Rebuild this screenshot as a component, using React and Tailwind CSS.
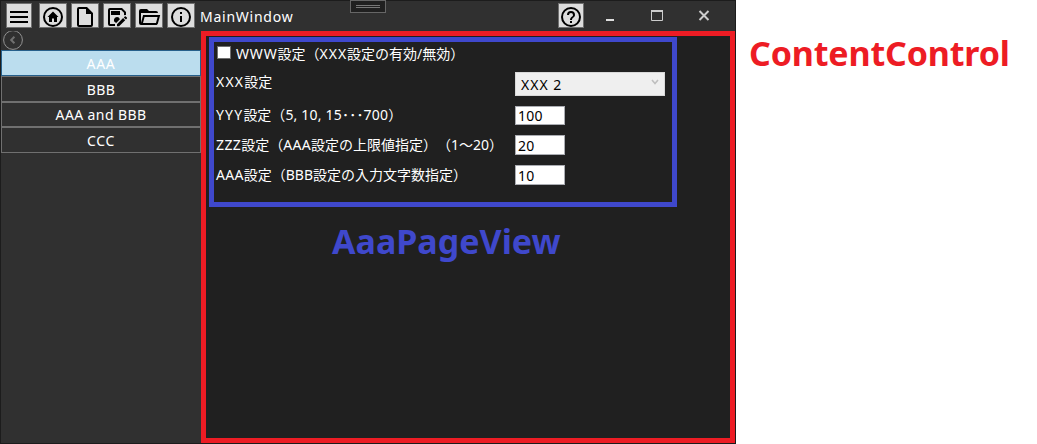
import React from "react";

const ICONS = {
  menu: "M3 6H21V8H3V6M3 11H21V13H3V11M3 16H21V18H3V16Z",
  home: "M12 2A10 10 0 1 0 12 22A10 10 0 0 0 12 2M12 4A8 8 0 1 1 12 20A8 8 0 0 1 12 4M12 6.5L6.5 12H8V17H11V13.5H13V17H16V12H17.5L12 6.5Z",
  file: "M14 2H6A2 2 0 0 0 4 4V20A2 2 0 0 0 6 22H18A2 2 0 0 0 20 20V8L14 2M18 20H6V4H13V9H18V20Z",
  folder:
    "M6.1 10L4 18V8H21A2 2 0 0 0 19 6H12L10 4H4A2 2 0 0 0 2 6V18A2 2 0 0 0 4 20H19C19.9 20 20.7 19.4 20.9 18.5L23.2 10H6.1M19 18H6L7.6 12H20.6L19 18Z",
  save: "M5 3H17L21 7V10.2C20.2 9.9 19.5 10 19 10.4V7.8L16.2 5H5V19H10V21H5A2 2 0 0 1 3 19V5A2 2 0 0 1 5 3M6 6H15V10H6V6M12 12A3 3 0 0 1 14.9 14.2L11.2 17.9A3 3 0 0 1 12 12M12 19.2L18.1 13.1L20.2 15.2L14.1 21.3H12V19.2M18.8 12.4L19.8 11.4C20.1 11.1 20.4 11.1 20.7 11.4L21.9 12.6C22.2 12.9 22.2 13.3 21.9 13.5L20.9 14.5L18.8 12.4Z",
  info: "M11 9H13V7H11M12 20A8 8 0 1 1 12 4A8 8 0 0 1 12 20M12 2A10 10 0 1 0 12 22A10 10 0 0 0 12 2M11 17H13V11H11V17Z",
  help: "M11 18H13V16H11V18M12 2A10 10 0 1 0 12 22A10 10 0 0 0 12 2M12 20A8 8 0 1 1 12 4A8 8 0 0 1 12 20M12 6A4 4 0 0 0 8 10H10A2 2 0 1 1 14 10C14 12 11 11.75 11 15H13C13 12.75 16 12.5 16 10A4 4 0 0 0 12 6Z",
};

function ToolButton({ icon, label, className = "w-7" }) {
  return (
    <button
      aria-label={label}
      className={`flex h-[25px] shrink-0 items-start justify-center overflow-hidden border border-[#707070] bg-[#dddddd] pt-px ${className}`}
    >
      <svg viewBox="0 0 24 24" className="h-6 w-6 shrink-0 fill-black">
        <path fillRule="evenodd" d={ICONS[icon]} />
      </svg>
    </button>
  );
}

function TitleBar() {
  return (
    <header className="relative flex h-[31px] w-full items-start border-t border-[#1c1c1c] bg-[#303030] pl-[5px] pt-[2px]">
      <ToolButton icon="menu" label="Menu" className="mr-[7px] w-[26px]" />
      <div className="flex gap-1">
        <ToolButton icon="home" label="Home" />
        <ToolButton icon="file" label="New" />
        <ToolButton icon="save" label="Save as" />
        <ToolButton icon="folder" label="Open" />
        <ToolButton icon="info" label="Info" />
      </div>
      <span className="ml-[5px] pt-px text-[14px] leading-[25px] tracking-[0.75px]">MainWindow</span>
      <div className="absolute left-[349px] -top-px flex h-[13px] w-9 flex-col items-center gap-px border border-[#666] bg-[#202020] pt-1">
        <span className="h-px w-6 bg-[#777]" />
        <span className="h-px w-6 bg-[#777]" />
      </div>
      <div className="ml-auto flex pr-[25px]">
        <ToolButton icon="help" label="Help" className="w-[26px]" />
        <svg viewBox="0 0 126 25" className="h-[25px] w-[126px]" fill="none">
          <path d="M22 17H30" stroke="#ddd" strokeWidth="2" />
          <path d="M67.5 7.5H78.5V17.5H67.5Z" stroke="#ccc" />
          <path d="M67 8H79" stroke="#ccc" strokeWidth="2" />
          <path d="M115.5 8L124.5 17M124.5 8L115.5 17" stroke="#ccc" strokeWidth="2" />
        </svg>
      </div>
    </header>
  );
}

function NavItem({ children, selected, className }) {
  return (
    <li
      className={`flex w-full items-center justify-center border text-[14px] leading-5 ${
        selected ? "border-[#26608c] bg-[#bbddee]" : "border-[#707070] bg-[#303030]"
      } ${className}`}
    >
      {children}
    </li>
  );
}

function Sidebar() {
  return (
    <nav className="w-[200px] shrink-0 bg-[#303030]">
      <div className="h-[19px] pl-[2px]">
        <svg viewBox="0 0 20 20" className="-mt-px h-5 w-5" fill="none">
          <circle cx="10" cy="10" r="9.4" stroke="#929292" />
          <path d="M11.4 6.8L8.2 10L11.4 13.2" stroke="#707070" strokeWidth="2" />
        </svg>
      </div>
      <ul className="pt-px">
        <NavItem selected className="h-[26px] pt-[2px] tracking-[0.7px]">AAA</NavItem>
        <NavItem className="h-[26px] pt-[2px] tracking-[0.4px]">BBB</NavItem>
        <NavItem className="h-[25px] tracking-[0.4px]">AAA and BBB</NavItem>
        <NavItem className="h-[26px] pt-[2px] tracking-[0.7px]">CCC</NavItem>
      </ul>
    </nav>
  );
}

function NumberField({ value, className }) {
  return (
    <div className={`w-[50px] border border-[#abadb3] bg-white pl-[2px] text-[14px] tracking-[0.3px] text-black ${className}`}>
      {value}
    </div>
  );
}

function Label({ children, className = "" }) {
  return (
    <span className={`w-[299px] shrink-0 whitespace-nowrap text-[14px] leading-5 [text-spacing-trim:space-all] ${className}`}>
      {children}
    </span>
  );
}

function SettingsPage() {
  return (
    <section className="ml-[3px] mt-px h-[170px] w-[468px] border-[5px] border-[#3f48cc] pl-[2px]">
      <div className="flex h-[30px] items-start pl-px">
        <span className="mt-1 h-[13px] w-[14px] shrink-0 border border-[#707070] bg-white" />
        <Label className="ml-[5px] mt-[2px]">
          <span className="tracking-[0.8px]">WWW</span>設定（<span className="tracking-[1px]">XXX</span>設定の有効/無効）
        </Label>
      </div>
      <div className="flex h-[34px] items-start">
        <Label>
          <span className="tracking-[1.2px]">XXX</span>設定
        </Label>
        <div className="flex h-6 w-[150px] items-center justify-between border border-[#d9d9d9] bg-[#efefef] pl-[5px] pr-[5px] text-[14px] text-black">
          <span className="pt-px tracking-[1px]">XXX 2</span>
          <svg viewBox="0 0 8 8" className="-mt-1 h-2 w-2" fill="none">
            <path d="M1 2L4 5.5L7 2" stroke="#bfbfbf" strokeWidth="1.6" />
          </svg>
        </div>
      </div>
      <div className="flex h-[29px] items-start">
        <Label className="-mt-px">
          <span className="tracking-[1.2px]">YYY</span>設定（<span className="tracking-[0.2px]">5, 10, 15･･･700</span>）
        </Label>
        <NumberField value="100" className="h-[19px] leading-[18px]" />
      </div>
      <div className="flex h-[30px] items-start">
        <Label>
          <span className="tracking-[0.4px]">ZZZ</span>設定（<span className="tracking-[0.3px]">AAA</span>設定の上限値指定）（1～20）
        </Label>
        <NumberField value="20" className="h-5 leading-[19px]" />
      </div>
      <div className="flex h-[30px] items-start">
        <Label>
          <span className="tracking-[0.3px]">AAA</span>設定（BBB設定の入力文字数指定）
        </Label>
        <NumberField value="10" className="h-5 leading-[19px]" />
      </div>
    </section>
  );
}

export default function App() {
  return (
    <div className="flex h-[444px] w-[1037px] overflow-hidden bg-white font-['Noto_Sans','Noto_Sans_CJK_JP',sans-serif] text-white">
      <div className="flex w-[736px] shrink-0 flex-col border-x border-b border-[#1c1c1c] bg-[#202020]">
        <TitleBar />
        <div className="flex min-h-0 flex-1">
          <Sidebar />
          <main className="flex-1 border-[5px] border-[#ed1c24] bg-[#202020]">
            <SettingsPage />
            <h2 className="ml-[126px] mt-[11px] whitespace-nowrap text-[34px] font-bold leading-[46px] text-[#3f48cc]">
              AaaPageView
            </h2>
          </main>
        </div>
      </div>
      <h1 className="ml-[13px] mt-[30px] whitespace-nowrap text-[34px] font-bold leading-[46px] tracking-[-0.15px] text-[#ed1c24]">
        ContentControl
      </h1>
    </div>
  );
}
